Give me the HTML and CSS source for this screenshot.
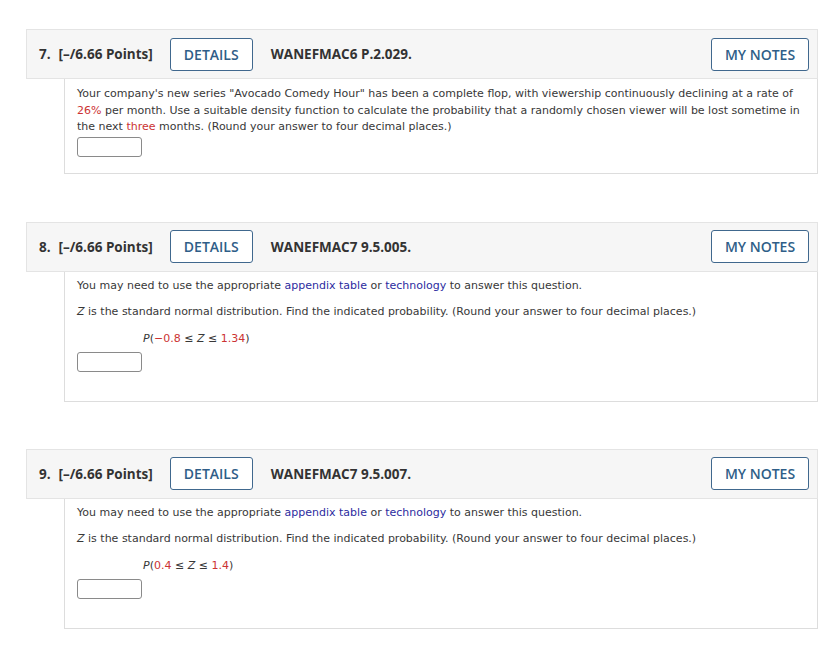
FILE: index.html
```html
<!DOCTYPE html>
<html>
<head>
<meta charset="utf-8">
<link rel="stylesheet" href="styles.css">
</head>
<body>
<div class="page">
  <section class="question question-first">
    <div class="q-head">
      <span class="q-num">7.</span>
      <span class="q-points">[–/6.66 Points]</span>
      <button class="btn btn-details">DETAILS</button>
      <span class="q-code">WANEFMAC6 P.2.029.</span>
      <button class="btn btn-notes">MY NOTES</button>
    </div>
    <div class="q-body q-body-short">
      <p class="text text-dense">Your company's new series "Avocado Comedy Hour" has been a complete flop, with viewership continuously declining at a rate of <span class="red">26%</span> per month. Use a suitable density function to calculate the probability that a randomly chosen viewer will be lost sometime in the next <span class="red">three</span> months. (Round your answer to four decimal places.)</p>
      <div class="answer answer-tight"></div>
    </div>
  </section>

  <section class="question">
    <div class="q-head">
      <span class="q-num">8.</span>
      <span class="q-points">[–/6.66 Points]</span>
      <button class="btn btn-details">DETAILS</button>
      <span class="q-code">WANEFMAC7 9.5.005.</span>
      <button class="btn btn-notes">MY NOTES</button>
    </div>
    <div class="q-body">
      <p class="text para">You may need to use the appropriate <span class="link">appendix table</span> or <span class="link">technology</span> to answer this question.</p>
      <p class="text para"><i>Z</i> is the standard normal distribution. Find the indicated probability. (Round your answer to four decimal places.)</p>
      <p class="text formula"><i>P</i>(<span class="red">−0.8</span> ≤ <i>Z</i> ≤ <span class="red">1.34</span>)</p>
      <div class="answer"></div>
    </div>
  </section>

  <section class="question">
    <div class="q-head">
      <span class="q-num">9.</span>
      <span class="q-points">[–/6.66 Points]</span>
      <button class="btn btn-details">DETAILS</button>
      <span class="q-code">WANEFMAC7 9.5.007.</span>
      <button class="btn btn-notes">MY NOTES</button>
    </div>
    <div class="q-body">
      <p class="text para">You may need to use the appropriate <span class="link">appendix table</span> or <span class="link">technology</span> to answer this question.</p>
      <p class="text para"><i>Z</i> is the standard normal distribution. Find the indicated probability. (Round your answer to four decimal places.)</p>
      <p class="text formula"><i>P</i>(<span class="red">0.4</span> ≤ <i>Z</i> ≤ <span class="red">1.4</span>)</p>
      <div class="answer"></div>
    </div>
  </section>
</div>
</body>
</html>
```

FILE: styles.css
```css
html, body {
  margin: 0;
  padding: 0;
  background: #ffffff;
}

.page {
  padding: 29px 10px 0 26px;
}

.question {
  margin-bottom: 47px;
}

.question-first {
  margin-bottom: 48px;
}

.q-head {
  display: flex;
  align-items: center;
  height: 50px;
  box-sizing: border-box;
  background: #f6f6f6;
  border: 1px solid #e4e4e4;
  padding: 0 8px 0 12px;
  font-family: "Open Sans", "Liberation Sans", sans-serif;
  font-weight: 700;
  font-size: 13.5px;
  color: #333333;
}

.q-num {
  margin-right: 8px;
}

.btn {
  font-family: "Open Sans", "Liberation Sans", sans-serif;
  font-weight: 600;
  font-size: 14px;
  color: #2f5e88;
  background: #ffffff;
  border: 1.5px solid #40688e;
  border-radius: 3px;
  height: 33px;
  padding: 0;
  box-sizing: border-box;
}

.btn-details {
  width: 83px;
  margin-left: 17px;
}

.q-code {
  margin-left: 18px;
}

.btn-notes {
  width: 98px;
  margin-left: auto;
}

.q-body {
  margin-left: 38px;
  border: 1px solid #dddddd;
  border-top: none;
  padding: 5px 12px 29px 12px;
}

.q-body-short {
  padding-top: 7px;
  padding-bottom: 16px;
}

.text {
  margin: 0;
  font-family: "DejaVu Sans", Verdana, sans-serif;
  font-size: 11px;
  line-height: 17px;
  color: #383838;
}

.text-dense {
  line-height: 16.5px;
}

.para {
  margin-bottom: 9px;
}

.formula {
  padding-left: 66px;
  margin-top: 10px;
  margin-bottom: 5px;
}

.red {
  color: #cc3333;
}

.link {
  color: #2c2ca0;
}

.answer {
  width: 65px;
  height: 20px;
  box-sizing: border-box;
  border: 1px solid #8a8a8a;
  border-radius: 3px;
  background: #ffffff;
  margin-top: 2px;
}

.answer-tight {
  margin-top: 1px;
}
```
